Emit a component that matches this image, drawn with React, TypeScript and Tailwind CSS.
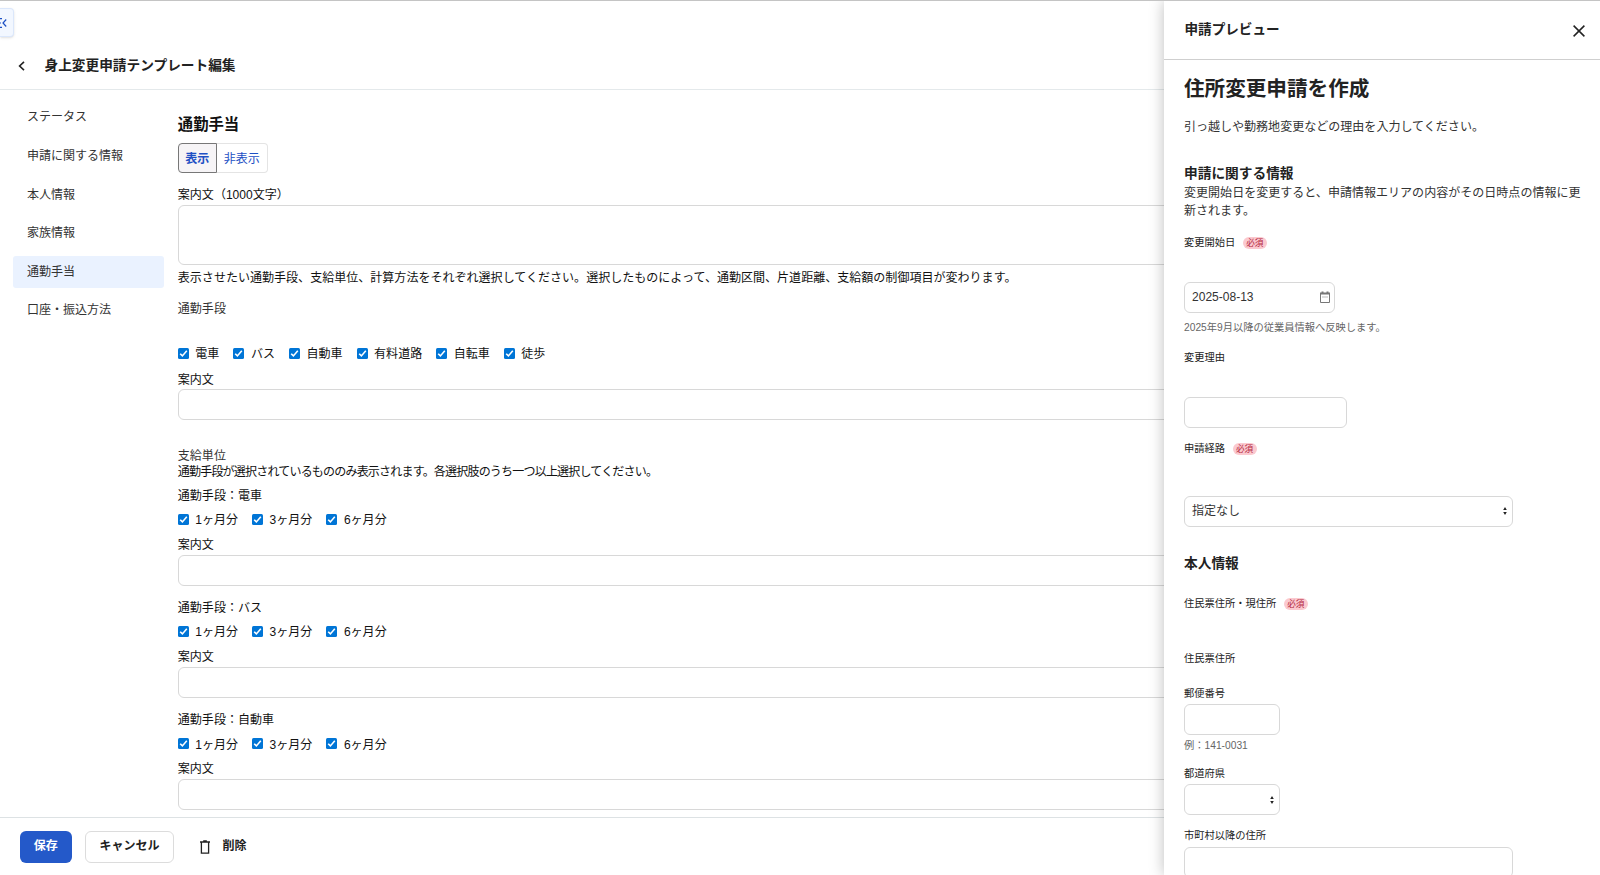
import { useState } from 'react';
import type { ReactNode } from 'react';

const menus = ['ステータス', '申請に関する情報', '本人情報', '家族情報', '通勤手当', '口座・振込方法'];
const commuteTypes = ['電車', 'バス', '自動車', '有料道路', '自転車', '徒歩'];
const unitGroups = ['電車', 'バス', '自動車'];
const units = ['1ヶ月分', '3ヶ月分', '6ヶ月分'];

function CheckItem({ label }: { label: string }) {
  const [checked, setChecked] = useState(true);

  return (
    <label className="flex items-center">
      <input
        type="checkbox"
        className="sr-only"
        checked={checked}
        onChange={(e) => setChecked(e.target.checked)}
      />
      <span
        className={
          checked
            ? 'mb-[2px] flex size-[11px] items-center justify-center rounded-[1.5px] bg-[#0075d6]'
            : 'mb-[2px] size-[11px] rounded-[1.5px] border border-gray-500'
        }
      >
        {checked && (
          <svg viewBox="0 0 11 11" className="size-[11px]" fill="none" stroke="white" strokeWidth="1.6">
            <path d="M2.2 5.7l2.2 2.2 4.4-5.1" />
          </svg>
        )}
      </span>
      <span className="ml-[6.5px]">{label}</span>
    </label>
  );
}

function RequiredBadge() {
  return (
    <span className="mb-px ml-[7.5px] flex h-3 w-6 items-center justify-center rounded-full bg-[#fbc9cf] text-[8.6px] leading-3 text-[#b3283f]">
      必須
    </span>
  );
}

function FieldLabel({ children, required, className }: { children: ReactNode; required?: boolean; className: string }) {
  return (
    <div className={`flex h-4 items-center text-[10.25px] leading-4 text-[#222] ${className}`}>
      <span>{children}</span>
      {required && <RequiredBadge />}
    </div>
  );
}

function SelectArrows() {
  return (
    <svg viewBox="0 0 4 8" className="h-2 w-1" fill="#222">
      <path d="M2 0l1.8 2.9H.2zM2 8L.2 5.1h3.6z" />
    </svg>
  );
}

function Sidebar() {
  return (
    <nav className="mt-[12.1px] flex w-[150.5px] shrink-0 flex-col gap-[6.9px]">
      {menus.map((menu) => (
        <a
          key={menu}
          className={
            menu === '通勤手当'
              ? 'flex h-[31.7px] items-center rounded-[3px] bg-[#eaf2ff] pl-[13.6px] text-[#333]'
              : 'flex h-[31.7px] items-center pl-[13.6px] text-[#333]'
          }
        >
          {menu}
        </a>
      ))}
    </nav>
  );
}

function CommuteForm() {
  return (
    <section className="ml-[14px] flex grow flex-col pt-[25px] text-[#111]">
      <h2 className="h-5 text-[15.35px] leading-5 font-bold">通勤手当</h2>

      {/* 表示切り替え */}
      <div className="mt-[8.5px] flex h-[30px] text-[#1d50c4]">
        <button className="h-full w-[39px] rounded-l-[4px] border border-[#777] bg-[#f6f4f6] pt-px font-bold">表示</button>
        <button className="h-full w-[51px] rounded-r-[4px] border border-l-0 border-[#e4e4e4] pt-px">非表示</button>
      </div>

      <p className="mt-[13.5px] h-4">案内文（1000文字）</p>
      <textarea className="mt-[2px] h-[60px] resize-none rounded-[6px] border border-[#d8d8d8]" />
      <p className="mt-[5.5px] h-4">
        表示させたい通勤手段、支給単位、計算方法をそれぞれ選択してください。選択したものによって、通勤区間、片道距離、支給額の制御項目が変わります。
      </p>
      <p className="mt-[15px] h-4 text-[#333]">通勤手段</p>

      <div className="mt-[29px] flex h-4 gap-[14px]">
        {commuteTypes.map((type) => (
          <CheckItem key={type} label={type} />
        ))}
      </div>
      <p className="mt-[9.5px] h-4">案内文</p>
      <input className="mt-[1px] h-[31px] rounded-[6px] border border-[#d8d8d8]" />

      <p className="mt-[28.5px] h-4 text-[#333]">支給単位</p>
      <p className="h-4 tracking-[-0.83px]">
        通勤手段が選択されているもののみ表示されます。各選択肢のうち一つ以上選択してください。
      </p>

      {/* 手段ごとの支給単位 */}
      <div className="mt-[7.5px] flex flex-col gap-[13.9px]">
        {unitGroups.map((group) => (
          <div key={group} className="flex flex-col">
            <p className="h-4">通勤手段：{group}</p>
            <div className="mt-[8.5px] flex h-4 gap-[14px]">
              {units.map((unit) => (
                <CheckItem key={unit} label={unit} />
              ))}
            </div>
            <p className="mt-[8.9px] h-4">案内文</p>
            <input className="mt-[2px] h-[31px] rounded-[6px] border border-[#d8d8d8]" />
          </div>
        ))}
      </div>
    </section>
  );
}

function PreviewPanel() {
  return (
    <aside className="absolute top-0 right-0 flex h-full w-[436px] flex-col overflow-hidden bg-white text-[#333] shadow-[0_0_14px_rgba(0,0,0,0.26)]">
      <div className="flex h-[59px] shrink-0 items-center justify-between border-b border-[#cfcfcf] pr-[15px] pl-[20.5px]">
        <h2 className="pb-px text-[13.6px] font-bold text-[#222]">申請プレビュー</h2>
        <svg viewBox="0 0 12 12" className="mt-px size-3" fill="none" stroke="#222" strokeWidth="1.5">
          <path d="M.6.6l10.8 10.8M11.4.6L.6 11.4" />
        </svg>
      </div>

      <div className="flex shrink-0 flex-col items-start pr-[14px] pl-5">
        <h1 className="mt-[15px] h-7 text-[20.6px] leading-7 font-bold text-[#222]">住所変更申請を作成</h1>
        <p className="mt-[16px] h-4">引っ越しや勤務地変更などの理由を入力してください。</p>

        <h3 className="mt-[30.5px] h-4 text-[13.7px] leading-4 font-bold text-[#222]">申請に関する情報</h3>
        <p className="mt-[2.5px] leading-[18.4px]">
          変更開始日を変更すると、申請情報エリアの内容がその日時点の情報に更新されます。
        </p>
        <FieldLabel required className="mt-[14.5px]">変更開始日</FieldLabel>
        <div className="mt-[30.5px] flex h-[31px] w-[151px] items-center justify-between rounded-[6px] border border-[#d8d8d8] pr-[4px] pl-[7px]">
          <span className="pb-px">2025-08-13</span>
          <svg viewBox="0 0 10 12" className="h-3 w-[10px]" fill="none" stroke="#777">
            <path d="M.5 2v9.5h9V2" />
            <path d="M0 2.5h10M2.5.5v1M7.5.5v1" strokeWidth="2" />
            <path d="M2.5 6h5" strokeDasharray="1 1" />
          </svg>
        </div>
        <p className="mt-[7.5px] h-4 text-[10.25px] leading-4 text-[#666]">2025年9月以降の従業員情報へ反映します。</p>

        <FieldLabel className="mt-[14px]">変更理由</FieldLabel>
        <input className="mt-[30.5px] h-[31px] w-[163px] rounded-[6px] border border-[#d8d8d8]" />
        <FieldLabel required className="mt-[13.5px]">申請経路</FieldLabel>
        <div className="mt-[38.5px] flex h-[31px] w-[329px] items-center justify-between rounded-[6px] border border-[#d8d8d8] pr-[5px] pl-[7px]">
          <span>指定なし</span>
          <SelectArrows />
        </div>

        <h3 className="mt-[29.5px] h-4 text-[13.7px] leading-4 font-bold text-[#222]">本人情報</h3>
        <FieldLabel required className="mt-[24px]">住民票住所・現住所</FieldLabel>
        <FieldLabel className="mt-[39px]">住民票住所</FieldLabel>
        <FieldLabel className="mt-[18.5px]">郵便番号</FieldLabel>
        <input className="mt-[2px] h-[31px] w-[96px] rounded-[6px] border border-[#d8d8d8]" />
        <p className="mt-[3.5px] h-4 text-[10.25px] leading-4 text-[#666]">例：141-0031</p>
        <FieldLabel className="mt-[12px]">都道府県</FieldLabel>
        <div className="mt-[2px] flex h-[31px] w-[96px] items-center justify-end rounded-[6px] border border-[#d8d8d8] pr-[5px]">
          <SelectArrows />
        </div>
        <FieldLabel className="mt-[13px]">市町村以降の住所</FieldLabel>
        <input className="mt-[2.5px] h-[31px] w-[329px] rounded-[6px] border border-[#d8d8d8]" />
      </div>
    </aside>
  );
}

export default function App() {
  return (
    <div className="relative flex h-[875px] w-[1600px] flex-col overflow-hidden border-t border-[#c4c4c4] bg-white font-['Liberation_Sans','Noto_Sans_CJK_JP',sans-serif] text-[12.04px] leading-4">
      {/* サイドメニュー開閉 */}
      <button className="absolute top-[7px] left-0 flex h-[29px] w-[14px] items-center rounded-r-[4px] border border-l-0 border-[#dbe7fb] bg-[#f2f7ff] shadow-sm">
        <svg viewBox="0 0 7 10" className="h-[10px] w-[7px]" fill="none" stroke="#1d50c4" strokeWidth="1.2">
          <path d="M6.2 1.5L3 5l3.2 3.5M0 .6h2M0 5h1M0 9.4h2" />
        </svg>
      </button>

      <header className="flex h-[88.5px] shrink-0 items-end border-b border-[#e4e9eb] pb-[14px] pl-[18px]">
        <div className="flex h-[18px] items-center">
          <svg viewBox="0 0 7 10" className="h-[10px] w-[7px]" fill="none" stroke="#222" strokeWidth="1.6">
            <path d="M6 .8L1.6 5 6 9.2" />
          </svg>
          <h1 className="ml-[19.5px] text-[13.68px] font-bold text-[#222]">身上変更申請テンプレート編集</h1>
        </div>
      </header>

      <main className="flex min-h-0 grow overflow-hidden pl-[13.3px]">
        <Sidebar />
        <CommuteForm />
      </main>

      <footer className="flex h-[58px] shrink-0 items-center border-t border-[#dde2e4] pl-5">
        <button className="h-8 w-[51.5px] rounded-[6px] bg-[#2459c9] pb-px font-bold text-white">保存</button>
        <button className="ml-[13.5px] h-8 w-[89px] rounded-[6px] border border-[#dcdcdc] pb-px font-bold text-[#222]">
          キャンセル
        </button>
        <button className="ml-[26px] flex items-center font-bold text-[#222]">
          <svg viewBox="0 0 10 14" className="h-[14px] w-[10px]" fill="none" stroke="#222" strokeWidth="1.3">
            <path d="M0 2h10M3.2.8h3.6M1.4 2v11.2h7.2V2" />
          </svg>
          <span className="ml-[12.5px] pb-px">削除</span>
        </button>
      </footer>

      <PreviewPanel />
    </div>
  );
}
